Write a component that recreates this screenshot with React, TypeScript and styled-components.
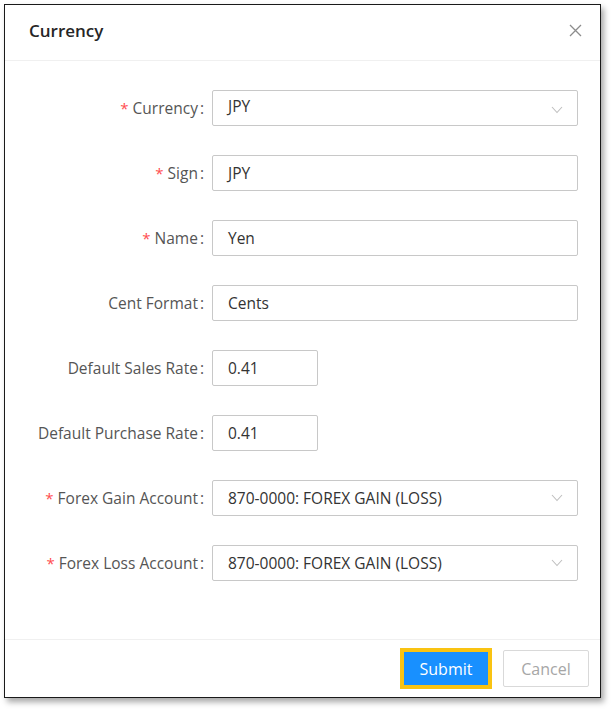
import React from "react";
import styled, { createGlobalStyle } from "styled-components";

const Global = createGlobalStyle`
  html, body { margin: 0; padding: 0; background: #ffffff; }
  body { font-family: "Open Sans", "Noto Sans", sans-serif; }
  * { box-sizing: border-box; }
`;

const Page = styled.div`
  padding: 4px 0 0 4px;
  width: 613px;
  height: 711px;
`;

const Dialog = styled.div`
  width: 597px;
  height: 694px;
  border: 1.5px solid #1a1a1a;
  background: #fff;
  box-shadow: 3px 4px 6px rgba(0, 0, 0, 0.35);
  display: flex;
  flex-direction: column;
`;

const Header = styled.div`
  height: 56px;
  flex: none;
  display: flex;
  align-items: center;
  justify-content: space-between;
  padding: 0 17px 4px 24px;
  border-bottom: 1px solid #f0f0f0;
`;

const Title = styled.div`
  font-size: 17px;
  font-weight: 600;
  color: #262626;
`;

const Close = styled.button`
  border: none;
  background: none;
  padding: 0;
  width: 16px;
  height: 16px;
  display: flex;
  align-items: center;
  justify-content: center;
  cursor: pointer;
`;

const Body = styled.div`
  flex: 1;
  padding: 29px 22px 0 0;
  display: flex;
  flex-direction: column;
  gap: 29px;
`;

const Row = styled.div`
  display: flex;
  align-items: center;
  height: 36px;
`;

const Label = styled.label`
  width: 207px;
  flex: none;
  text-align: right;
  padding-right: 8px;
  font-size: 15.5px;
  color: #555;
  white-space: nowrap;
`;

const Star = styled.span`
  color: #ff4d4f;
  margin-right: 4px;
  font-size: 15px;
`;

const Colon = styled.span`
  margin-left: 2px;
`;

const Field = styled.div<{ $w?: number; $top?: boolean }>`
  ${(p) => (p.$w ? `width: ${p.$w}px;` : "flex: 1;")}
  height: 36px;
  border: 1px solid #c8c8c8;
  border-radius: 2px;
  display: flex;
  align-items: ${(p) => (p.$top ? "flex-start" : "center")};
  justify-content: space-between;
  padding: ${(p) => (p.$top ? "4px 14px 0 15px" : "0 14px 0 15px")};
  font-size: 15.5px;
  color: #333;
`;

const Chevron = styled.svg`
  align-self: center;
  flex: none;
`;

const Footer = styled.div`
  height: 58px;
  flex: none;
  border-top: 1px solid #f0f0f0;
  display: flex;
  align-items: center;
  justify-content: flex-end;
  gap: 11px;
  padding: 0 11px 0 0;
`;

const Primary = styled.button`
  height: 41px;
  width: 92px;
  border: 4px solid #f9c312;
  background: #1890ff;
  color: #fff;
  font-family: inherit;
  font-size: 16px;
  padding: 0;
`;

const Secondary = styled.button`
  height: 37px;
  width: 86px;
  border: 1px solid #d9d9d9;
  border-radius: 2px;
  background: #fff;
  color: #a6a6a6;
  font-family: inherit;
  font-size: 16px;
  padding: 0;
`;

type F = { label: string; value: string; req?: boolean; select?: boolean; w?: number };

const fields: F[] = [
  { label: "Currency", value: "JPY", req: true, select: true },
  { label: "Sign", value: "JPY", req: true },
  { label: "Name", value: "Yen", req: true },
  { label: "Cent Format", value: "Cents" },
  { label: "Default Sales Rate", value: "0.41", w: 106 },
  { label: "Default Purchase Rate", value: "0.41", w: 106 },
  { label: "Forex Gain Account", value: "870-0000: FOREX GAIN (LOSS)", req: true, select: true },
  { label: "Forex Loss Account", value: "870-0000: FOREX GAIN (LOSS)", req: true, select: true },
];

export default function App() {
  return (
    <>
      <Global />
      <Page>
        <Dialog>
          <Header>
            <Title>Currency</Title>
            <Close aria-label="close">
              <svg width="13" height="13" viewBox="0 0 13 13">
                <path d="M1 1 L12 12 M12 1 L1 12" stroke="#8c8c8c" strokeWidth="1.3" fill="none" />
              </svg>
            </Close>
          </Header>
          <Body>
            {fields.map((f) => (
              <Row key={f.label}>
                <Label>
                  {f.req && <Star>*</Star>}
                  {f.label}
                  <Colon>:</Colon>
                </Label>
                <Field $w={f.w} $top={f.label === "Currency"}>
                  <span>{f.value}</span>
                  {f.select && (
                    <Chevron width="12" height="8" viewBox="0 0 12 8">
                      <path d="M1 1 L6 6.5 L11 1" stroke="#bfbfbf" strokeWidth="1.1" fill="none" />
                    </Chevron>
                  )}
                </Field>
              </Row>
            ))}
          </Body>
          <Footer>
            <Primary>Submit</Primary>
            <Secondary>Cancel</Secondary>
          </Footer>
        </Dialog>
      </Page>
    </>
  );
}
